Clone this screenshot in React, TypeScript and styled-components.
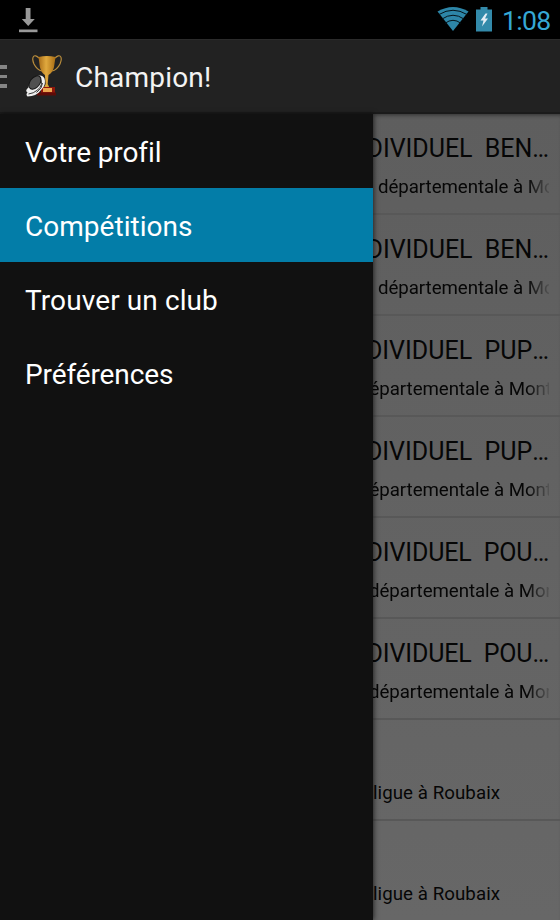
import React from 'react';
import styled, { createGlobalStyle } from 'styled-components';

const GlobalStyle = createGlobalStyle`
  * { box-sizing: border-box; }
  html, body { margin: 0; padding: 0; background: #000; }
  body { font-family: Roboto, "Noto Sans", sans-serif; overflow: hidden; }
`;

const Screen = styled.div`
  width: 560px;
  height: 920px;
  display: flex;
  flex-direction: column;
  overflow: hidden;
  background: #000;
`;

const StatusBar = styled.header`
  flex: 0 0 39px;
  display: flex;
  align-items: flex-start;
  padding: 0 10px 0 18px;
`;

const StatusIcons = styled.div`
  margin-left: auto;
  display: flex;
  align-items: flex-start;
  gap: 7px;
`;

const Clock = styled.time`
  margin-left: 2px;
  width: 48px;
  padding-top: 4px;
  font-size: 26.6px;
  line-height: 33px;
  letter-spacing: -0.7px;
  color: #35a8d4;
  white-space: nowrap;
`;

const ActionBar = styled.div`
  flex: 0 0 75px;
  display: flex;
  align-items: center;
  background: #222;
  border-top: 1px solid #2b2b2b;
  border-bottom: 2px solid #1b1b1b;
`;

const Grip = styled.div`
  width: 7px;
  margin-right: 17px;
  padding-top: 1px;
  display: grid;
  gap: 6px;
`;

const GripLine = styled.span`
  height: 3.5px;
  background: #858585;
`;

const AppTitle = styled.h1`
  margin: 0 0 0 13px;
  padding-top: 3px;
  font-weight: 400;
  font-size: 28px;
  line-height: 34px;
  letter-spacing: 0.2px;
  color: #f3f3f3;
`;

const Body = styled.div`
  flex: 1;
  min-height: 0;
  display: grid;
  grid-template-columns: 373px 187px;
`;

const Drawer = styled.nav`
  position: relative;
  z-index: 1;
  background: #111;
  box-shadow: 1px 0 5px rgba(0, 0, 0, 0.6);
`;

const DrawerItem = styled.div<{ $active?: boolean; $spacing: number }>`
  height: 74px;
  padding: 2px 0 0 25px;
  display: flex;
  align-items: center;
  font-size: 28px;
  letter-spacing: ${(p) => p.$spacing}px;
  color: #fff;
  background: ${(p) => (p.$active ? '#037da8' : 'transparent')};
`;

const List = styled.main`
  overflow: hidden;
  background: linear-gradient(#5e5e5e, #676767);
  box-shadow: inset 0 4px 4px -3px rgba(0, 0, 0, 0.5);
`;

const Row = styled.article`
  height: 101px;
  padding-right: 11px;
  border-bottom: 2px solid #585858;
  overflow: hidden;
`;

const RowTitle = styled.h2<{ $spacing: number }>`
  margin: 0;
  height: 56px;
  padding-top: 20px;
  display: flex;
  justify-content: flex-end;
  font-weight: 400;
  font-size: 25px;
  font-kerning: none;
  letter-spacing: ${(p) => p.$spacing}px;
  line-height: 30px;
  color: #060606;
  white-space: pre;
`;

const RowDetail = styled.p<{ $shift: number; $faded: boolean }>`
  margin: 0;
  padding-top: 5px;
  overflow: hidden;
  text-indent: ${(p) => p.$shift}px;
  font-size: 18.7px;
  letter-spacing: ${(p) => (p.$faded ? -0.06 : 0.06)}px;
  line-height: 24px;
  color: #060606;
  white-space: pre;
  mask-image: ${(p) => (p.$faded ? 'linear-gradient(to left, rgba(0, 0, 0, 0.15), #000 22px)' : 'none')};
`;

const DownloadIcon = () => (
  <svg width="20" height="34" viewBox="0 0 20 34">
    <path d="M7.700 8h4.800v11h4.300L10.200 26 3.800 19h3.900z" fill="#999" />
    <path d="M1 29.500h18.500v2.700H1z" fill="#999" />
  </svg>
);

const WifiIcon = () => (
  <svg width="32" height="34" viewBox="0 0 32 34">
    <path d="M0.500 11.500Q16 2.500 31.500 11.500L16 31z" fill="#2d86a8" />
    <g fill="none" stroke="#04141b" strokeWidth="1">
      <path d="M2 14.500Q16 6 30 14.500" />
      <path d="M5 19Q16 11.500 27 19" />
      <path d="M8 23.300Q16 17.300 24 23.300" />
    </g>
  </svg>
);

const BatteryIcon = () => (
  <svg width="17" height="34" viewBox="0 0 17 34">
    <path d="M4.500 7h7v2.500H16v22H0v-22h4.500z" fill="#338aaa" />
    <path d="M9.500 13.500l-5 7h3l-1.500 6 6-8H9l2.500-5z" fill="#e4edf5" />
  </svg>
);

const TrophyIcon = () => (
  <svg width="38" height="46" viewBox="0 0 38 46">
    <defs>
      <linearGradient id="gold">
        <stop offset="0" stopColor="#a96c18" />
        <stop offset="0.45" stopColor="#e0a93e" />
        <stop offset="1" stopColor="#a96d14" />
      </linearGradient>
    </defs>
    <g fill="none" stroke="#b88c3c" strokeWidth="1.200">
      <path d="M15 5C10 0 7 4 10 11q3 6 8 7" />
      <path d="M31 5c5-5 8-1 5 6q-3 6-8 7" />
    </g>
    <path d="M14.500 4q8.500-2 17 0L30 14q-1 5-5.500 8l-.800 9 2 4h-6l2-4-.800-9q-4-3-5-8z" fill="url(#gold)" />
    <path d="M17 34h14v6H17z" fill="#8f170b" />
    <path d="M13 39.500h19v3H13z" fill="#5d0c08" />
    <path d="M19 35h9v4h-9z" fill="#eaa650" />
    <path d="M12 23.500q6-3 8.500 2 2 6-3 11-5 7-14 7-2-2 0-4-3-2 1-5 1-8 8.500-11z" fill="#eee" />
    <ellipse cx="11" cy="29.500" rx="4.800" ry="7.600" transform="rotate(38 11 29.500)" fill="#505050" stroke="#151515" strokeWidth="1" />
    <path d="M16.500 26q3 6-3 11-4 3.500-9 4M18.500 30q0 5-6 9.500" fill="none" stroke="#222" strokeWidth="0.900" />
  </svg>
);

const menu = [
  { label: 'Votre profil', spacing: -0.1 },
  { label: 'Compétitions', spacing: 0.03, active: true },
  { label: 'Trouver un club', spacing: 0.1 },
  { label: 'Préférences', spacing: -0.1 },
];

const competitions = [
  { title: 'DIVIDUEL  BEN…', detail: 'départementale à Montigny', shift: 5, spacing: -0.04 },
  { title: 'DIVIDUEL  BEN…', detail: 'départementale à Montigny', shift: 5, spacing: -0.04 },
  { title: 'DIVIDUEL  PUP…', detail: 'départementale à Montigny', shift: -14, spacing: 0 },
  { title: 'DIVIDUEL  PUP…', detail: 'départementale à Montigny', shift: -14, spacing: 0 },
  { title: 'DIVIDUEL  POU…', detail: 'départementale à Montigny', shift: -4, spacing: -0.15 },
  { title: 'DIVIDUEL  POU…', detail: 'départementale à Montigny', shift: -4, spacing: -0.15 },
  { title: '', detail: 'ligue à Roubaix', shift: 0, spacing: 0 },
  { title: '', detail: 'ligue à Roubaix', shift: 0, spacing: 0 },
];

export default function App() {
  return (
    <>
      <GlobalStyle />
      <Screen>
        <StatusBar>
          <DownloadIcon />
          <StatusIcons>
            <WifiIcon />
            <BatteryIcon />
            <Clock>1:08</Clock>
          </StatusIcons>
        </StatusBar>
        <ActionBar>
          <Grip>
            <GripLine />
            <GripLine />
            <GripLine />
          </Grip>
          <TrophyIcon />
          <AppTitle>Champion!</AppTitle>
        </ActionBar>
        <Body>
          <Drawer>
            {menu.map((item) => (
              <DrawerItem key={item.label} $active={item.active} $spacing={item.spacing}>
                {item.label}
              </DrawerItem>
            ))}
          </Drawer>
          <List>
            {competitions.map((c, i) => (
              <Row key={i}>
                <RowTitle $spacing={c.spacing}>{c.title}</RowTitle>
                <RowDetail $shift={c.shift} $faded={c.title !== ''}>
                  {c.detail}
                </RowDetail>
              </Row>
            ))}
          </List>
        </Body>
      </Screen>
    </>
  );
}
